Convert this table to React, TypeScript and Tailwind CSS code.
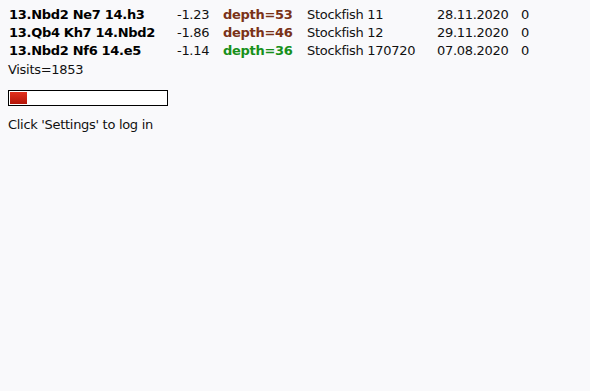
const lines = [
  { moves: "13.Nbd2 Ne7 14.h3", score: "-1.23", depth: 53, engine: "Stockfish 11", date: "28.11.2020", n: "0", good: false },
  { moves: "13.Qb4 Kh7 14.Nbd2", score: "-1.86", depth: 46, engine: "Stockfish 12", date: "29.11.2020", n: "0", good: false },
  { moves: "13.Nbd2 Nf6 14.e5", score: "-1.14", depth: 36, engine: "Stockfish 170720", date: "07.08.2020", n: "0", good: true },
]

export default function App() {
  return (
    <div className="min-h-[391px] w-full bg-[#f9f9fb] px-2 pt-[6px] text-[13px] leading-[18px] text-[#111] font-['DejaVu_Sans',sans-serif] tracking-[-0.3px]">
      {/* Analysis lines */}
      <div className="flex flex-col">
        {lines.map((l, i) => (
          <div key={i} className="flex h-[18px] items-center whitespace-nowrap">
            <div className="w-[169px] pl-px font-bold text-black">{l.moves}</div>
            <div className="w-[46px]">{l.score}</div>
            <div className={`w-[84px] font-bold ${l.good ? "text-[#18901a]" : "text-[#7a3218]"}`}>
              depth={l.depth}
            </div>
            <div className="w-[130px]">{l.engine}</div>
            <div className="w-[84px]">{l.date}</div>
            <div>{l.n}</div>
          </div>
        ))}
      </div>
      <div className="h-[20px] leading-[20px]">Visits=1853</div>

      {/* Progress */}
      <div className="mt-[10px] h-[16px] w-[160px] border border-black bg-white p-px">
        <div className="h-full w-[17px] bg-gradient-to-b from-[#e2301c] to-[#b41408]" />
      </div>

      <div className="mt-[10px]">Click 'Settings' to log in</div>
    </div>
  )
}
